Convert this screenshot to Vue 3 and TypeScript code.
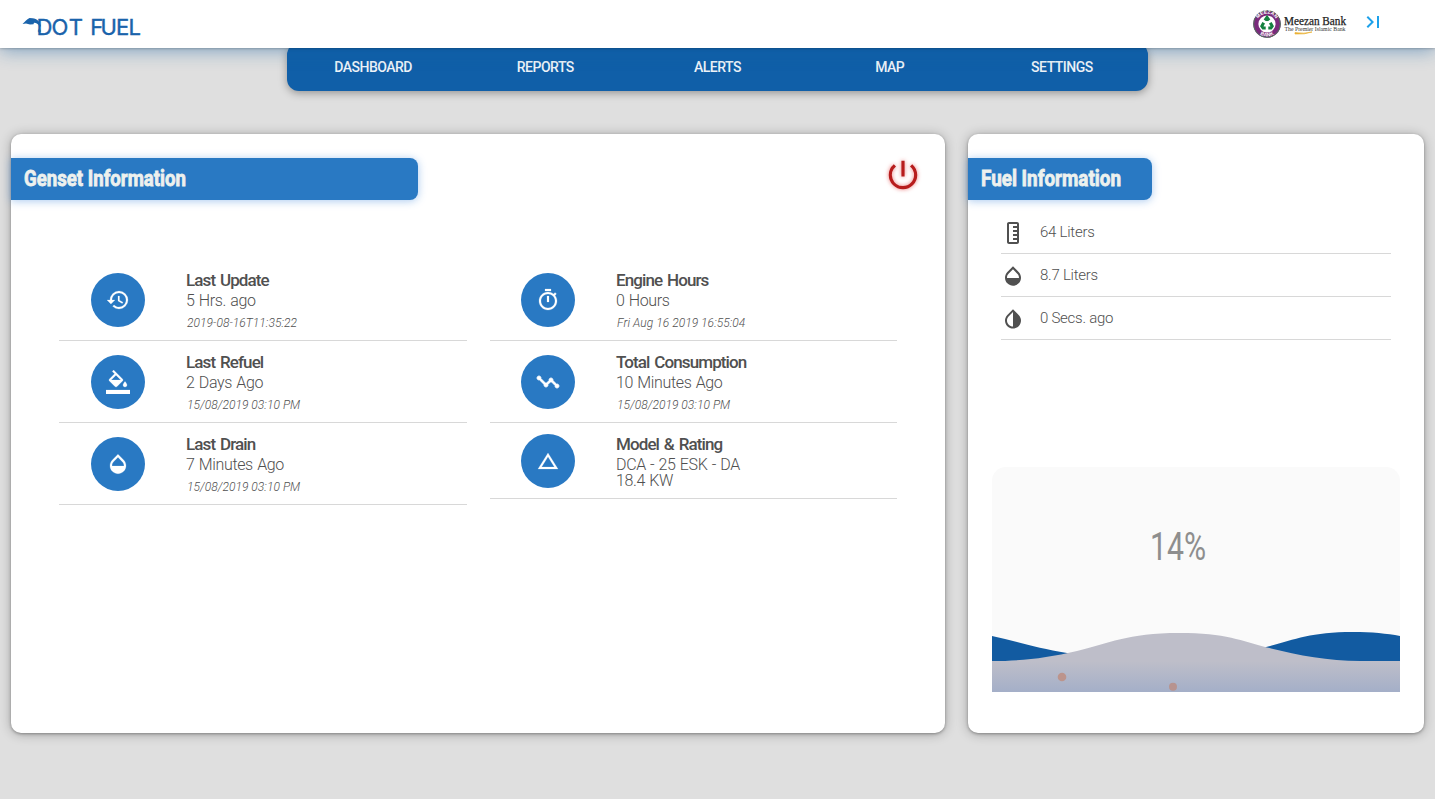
<script setup lang="ts">
interface InfoRow {
  icon: string
  title: string
  value: string[]
  stamp?: string
  flip?: boolean
}

interface FuelRow {
  icon: string
  text: string
  rotate?: boolean
}

const icons: Record<string, string> = {
  history:
    'M13 3a9 9 0 0 0-9 9H1l3.89 3.89.07.14L9 12H6c0-3.87 3.13-7 7-7s7 3.13 7 7-3.13 7-7 7c-1.93 0-3.68-.79-4.94-2.06l-1.42 1.42A8.954 8.954 0 0 0 13 21a9 9 0 0 0 0-18zm-1 5v5l4.28 2.54.72-1.21-3.5-2.08V8H12z',
  fill:
    'M16.56 8.94L7.62 0 6.21 1.41l2.38 2.38-5.15 5.15c-.59.59-.59 1.54 0 2.12l5.5 5.5c.29.29.68.44 1.06.44s.77-.15 1.06-.44l5.5-5.5c.59-.58.59-1.53 0-2.12zM5.21 10L10 5.21 14.79 10H5.21zM19 11.5s-2 2.17-2 3.5c0 1.1.9 2 2 2s2-.9 2-2c0-1.33-2-3.5-2-3.5zM0 20h24v4H0z',
  opacity:
    'M17.66 8L12 2.35 6.34 8C4.78 9.56 4 11.64 4 13.64s.78 4.11 2.34 5.67 3.61 2.35 5.66 2.35 4.1-.79 5.66-2.35S20 15.64 20 13.64 19.22 9.56 17.66 8zM6 14c.01-2 .62-3.27 1.76-4.4L12 5.27l4.24 4.38C17.38 10.77 17.99 12 18 14H6z',
  timer:
    'M15 1H9v2h6V1zm-4 13h2V8h-2v6zm8.03-6.61l1.42-1.42c-.43-.51-.9-.99-1.41-1.41l-1.42 1.42C16.07 4.74 14.12 4 12 4c-4.97 0-9 4.03-9 9s4.02 9 9 9 9-4.03 9-9c0-2.12-.74-4.07-1.97-5.61zM12 20c-3.87 0-7-3.13-7-7s3.13-7 7-7 7 3.13 7 7-3.13 7-7 7z',
  timeline:
    'M23 8c0 1.1-.9 2-2 2-.18 0-.35-.02-.51-.07l-3.56 3.55c.05.16.07.34.07.52 0 1.1-.9 2-2 2s-2-.9-2-2c0-.18.02-.36.07-.52l-2.55-2.55c-.16.05-.34.07-.52.07s-.36-.02-.52-.07l-4.55 4.56c.05.16.07.33.07.51 0 1.1-.9 2-2 2s-2-.9-2-2 .9-2 2-2c.18 0 .35.02.51.07l4.56-4.55C8.02 9.36 8 9.18 8 9c0-1.1.9-2 2-2s2 .9 2 2c0 .18-.02.36-.07.52l2.55 2.55c.16-.05.34-.07.52-.07s.36.02.52.07l3.55-3.56C19.02 8.35 19 8.18 19 8c0-1.1.9-2 2-2s2 .9 2 2z',
  triangle: 'M12 7.77L18.39 18H5.61L12 7.77M12 4L2 20h20L12 4z',
  ruler:
    'M21 6H3c-1.1 0-2 .9-2 2v8c0 1.1.9 2 2 2h18c1.1 0 2-.9 2-2V8c0-1.1-.9-2-2-2zm0 10H3V8h2v4h2V8h2v4h2V8h2v4h2V8h2v4h2V8h2v8z',
  invert:
    'M17.66 7.93L12 2.27 6.34 7.93c-3.12 3.12-3.12 8.19 0 11.31C7.9 20.8 9.95 21.58 12 21.58s4.1-.78 5.66-2.34c3.12-3.12 3.12-8.19 0-11.31zM12 19.59c-1.6 0-3.11-.62-4.24-1.76C6.62 16.69 6 15.19 6 13.59s.62-3.11 1.76-4.24L12 5.1v14.49z',
  power:
    'M13 3h-2v10h2V3zm4.83 2.17l-1.42 1.42A6.92 6.92 0 0 1 19 12c0 3.87-3.13 7-7 7A6.995 6.995 0 0 1 7.58 6.58L6.17 5.17A8.932 8.932 0 0 0 3 12a9 9 0 0 0 18 0c0-2.74-1.23-5.18-3.17-6.83z',
  lastPage: 'M5.59 7.41L10.18 12l-4.59 4.59L7 18l6-6-6-6zM16 6h2v12h-2z',
}

const menu: string[] = ['DASHBOARD', 'REPORTS', 'ALERTS', 'MAP', 'SETTINGS']

const columns: InfoRow[][] = [
  [
    { icon: 'history', title: 'Last Update', value: ['5 Hrs. ago'], stamp: '2019-08-16T11:35:22' },
    { icon: 'fill', title: 'Last Refuel', value: ['2 Days Ago'], stamp: '15/08/2019 03:10 PM' },
    { icon: 'opacity', title: 'Last Drain', value: ['7 Minutes Ago'], stamp: '15/08/2019 03:10 PM' },
  ],
  [
    { icon: 'timer', title: 'Engine Hours', value: ['0 Hours'], stamp: 'Fri Aug 16 2019 16:55:04' },
    { icon: 'timeline', title: 'Total Consumption', value: ['10 Minutes Ago'], stamp: '15/08/2019 03:10 PM', flip: true },
    { icon: 'triangle', title: 'Model & Rating', value: ['DCA - 25 ESK - DA', '18.4 KW'] },
  ],
]

const fuel: FuelRow[] = [
  { icon: 'ruler', text: '64 Liters', rotate: true },
  { icon: 'opacity', text: '8.7 Liters' },
  { icon: 'invert', text: '0 Secs. ago' },
]
</script>

<template>
  <div class="page">
    <header class="topbar">
      <svg class="brand" width="130" height="34" viewBox="0 0 130 34">
        <path
          d="M.5 14L4 10.500 5.500 9.200 7.500 8 10.500 8.200C15 8.800 18.300 11.500 19 16.500L17.300 16.300C16.300 14 14.500 12.800 12 12.800L11.500 14.200 8 14.500 4 13.500Z"
          fill="#1a63ab"
        />
        <path d="M17.300 17.800l1.300 2.400a1.500 1.500 0 1 1-2.600 0z" fill="#70767f" />
        <text class="brand-text" x="14.500 29.400 46.700" y="25">DOT</text>
        <text class="brand-text" x="68.300 78.500 94 106.500" y="25">FUEL</text>
      </svg>
      <div class="top-right">
        <svg class="bank" width="100" height="34" viewBox="0 0 100 34">
          <defs>
            <path id="ring-top" d="M4.700 16a10.300 10.300 0 0 1 20.600 0" />
            <path id="ring-bottom" d="M2.600 16a12.400 12.400 0 0 0 24.800 0" />
          </defs>
          <circle cx="15" cy="16" r="13.800" fill="#7a2a7c" />
          <circle cx="15" cy="16" r="13.400" fill="none" stroke="#4c7a58" stroke-width=".9" />
          <circle cx="15" cy="16" r="8.600" fill="#fff" />
          <path
            d="M12.900 12.300L15 9.300l2.100 3M18.300 14.800l1.900 3.400-1.300 1.900h-2.600M13.700 20.100h-2.600L9.800 18.200l1.900-3.400"
            fill="none"
            stroke="#14803f"
            stroke-width="3"
          />
          <text class="ring-text"><textPath href="#ring-top" startOffset="50%" text-anchor="middle">MEEZAN</textPath></text>
          <text class="ring-text"><textPath href="#ring-bottom" startOffset="50%" text-anchor="middle">BANK</textPath></text>
          <text class="bank-name" x="32" y="17" textLength="62" lengthAdjust="spacingAndGlyphs">Meezan Bank</text>
          <text class="bank-tag" x="32.500" y="22.800" textLength="61" lengthAdjust="spacingAndGlyphs">The Premier Islamic Bank</text>
          <path d="M43 24.600Q52 26 60 24Q53 26.600 43 26Z" fill="#eab135" stroke="#eab135" stroke-width=".7" />
        </svg>
        <svg class="last" width="24" height="24" viewBox="0 0 24 24"><path :d="icons.lastPage" /></svg>
      </div>
    </header>

    <nav class="menu">
      <a v-for="item in menu" :key="item" class="menu-item">{{ item }}</a>
    </nav>

    <main class="cards">
      <section class="card genset">
        <div class="card-head">
          <h2 class="banner banner-wide">
            <svg width="240" height="34"><text class="banner-text" x="0" y="22.500" textLength="162" lengthAdjust="spacingAndGlyphs">Genset Information</text></svg>
          </h2>
          <svg class="power" width="38" height="38" viewBox="0 0 24 24"><path :d="icons.power" /></svg>
        </div>
        <div class="info">
          <div v-for="(rows, c) in columns" :key="c" class="info-col">
            <div v-for="row in rows" :key="row.title" class="info-row">
              <div class="badge">
                <svg :class="{ flip: row.flip }" width="24" height="24" viewBox="0 0 24 24"><path :d="icons[row.icon]" /></svg>
              </div>
              <div class="info-body">
                <div class="info-title">{{ row.title }}</div>
                <div v-for="line in row.value" :key="line" class="info-value">{{ line }}</div>
                <div v-if="row.stamp" class="info-stamp">{{ row.stamp }}</div>
              </div>
            </div>
          </div>
        </div>
      </section>

      <section class="card fuel">
        <h2 class="banner banner-narrow">
          <svg width="160" height="34"><text class="banner-text" x="0" y="22.500" textLength="140" lengthAdjust="spacingAndGlyphs">Fuel Information</text></svg>
        </h2>
        <ul class="fuel-list">
          <li v-for="row in fuel" :key="row.text" class="fuel-row">
            <svg :class="{ rotate: row.rotate }" width="24" height="24" viewBox="0 0 24 24"><path :d="icons[row.icon]" /></svg>
            <span>{{ row.text }}</span>
          </li>
        </ul>
        <svg class="tank" width="408" height="225" viewBox="0 0 408 225">
          <defs>
            <linearGradient id="liquid" gradientUnits="userSpaceOnUse" x1="0" y1="194" x2="0" y2="225">
              <stop offset="0" stop-color="#bebec9" />
              <stop offset="1" stop-color="#a4afc8" />
            </linearGradient>
          </defs>
          <rect width="408" height="225" fill="#fafafa" />
          <text class="percent" x="158" y="93" textLength="56" lengthAdjust="spacingAndGlyphs">14%</text>
          <path d="M0 169C24 174 45 181 75 186L170 194L270 181C300 174 315 165 361 165C380 165 395 166.500 408 169V194H0Z" fill="#125ba1" />
          <path
            d="M0 194C30 194 55 191 85 184C117 176.500 135 166 187 166C234 166 250 174 275 180.500C305 188 335 194 368 194H408V225H0Z"
            fill="url(#liquid)"
          />
          <circle cx="70" cy="210" r="4.300" fill="#bc948c" />
          <circle cx="181" cy="219.700" r="4" fill="#b7938f" />
        </svg>
      </section>
    </main>
  </div>
</template>

<style>
body {
  background: #dfdfdf;
}
</style>

<style scoped>
.page {
  min-height: 799px;
  background: #dfdfdf;
  font-family: Roboto, "Open Sans", sans-serif;
  color: #505050;
}
.topbar {
  position: relative;
  z-index: 2;
  display: flex;
  justify-content: space-between;
  height: 48px;
  padding: 0 62px 0 22px;
  box-sizing: border-box;
  background: #fff;
  box-shadow: 0 0 3px rgba(0, 0, 0, 0.35), 0 3px 18px rgba(18, 95, 165, 0.45);
}
.brand {
  margin-top: 10px;
}
.brand-text {
  font: 400 22px Inter, sans-serif;
  fill: #1a63ab;
  stroke: #1a63ab;
  stroke-width: 0.4px;
}
.top-right {
  display: flex;
  gap: 9px;
}
.bank {
  margin-top: 8px;
}
.ring-text {
  font: 700 5px "Liberation Sans", sans-serif;
  fill: #fff;
}
.bank-name {
  font: 400 12px "Liberation Serif", serif;
  fill: #222;
  stroke: #222;
  stroke-width: 0.25px;
}
.bank-tag {
  font: 400 5.5px "Liberation Serif", serif;
  fill: #333;
}
.last {
  margin-top: 10px;
  margin-right: -12px;
  fill: #1da1ea;
}
.menu {
  display: flex;
  width: 861px;
  height: 48px;
  margin: -5px auto 0;
  padding-top: 5px;
  box-sizing: border-box;
  border-radius: 12px;
  background: #105fa8;
  box-shadow: 0 2px 8px rgba(0, 0, 0, 0.35);
}
.menu-item {
  flex: 1;
  text-align: center;
  color: #eef3f8;
  font-size: 14px;
  font-weight: 500;
  line-height: 39px;
  letter-spacing: -0.5px;
}
.cards {
  display: grid;
  grid-template-columns: 934px 456px;
  gap: 23px;
  padding: 43px 11px 0;
}
.card {
  height: 599px;
  border-radius: 10px;
  background: #fff;
  box-shadow: 0 1px 3px rgba(0, 0, 0, 0.3), 0 1px 12px rgba(0, 0, 0, 0.28);
}
.card-head {
  display: flex;
  justify-content: space-between;
}
.banner {
  height: 42px;
  margin: 24px 0 0;
  padding: 5px 0 0 13px;
  box-sizing: border-box;
  border-radius: 0 8px 8px 0;
  background: #2979c3;
  box-shadow: 0 1px 9px rgba(41, 121, 215, 0.4);
}
.banner-wide {
  width: 407px;
}
.banner-narrow {
  width: 184px;
}
.banner-text {
  font: 700 22px Roboto, sans-serif;
  fill: #edf1ee;
  stroke: #edf1ee;
  stroke-width: 0.8px;
}
.power {
  margin: 22px 23px 0 0;
  fill: #b71c1c;
  filter: drop-shadow(0 0 2px rgba(220, 30, 30, 0.6));
}
.info {
  display: grid;
  grid-template-columns: 408px 407px;
  gap: 23px;
  margin: 59px 0 0 48px;
}
.info-row {
  display: flex;
  align-items: center;
  padding: 12px 0 9px 32px;
  border-bottom: 1px solid #d8d8d8;
}
.info-col + .info-col .info-row {
  padding-left: 31px;
}
.badge {
  display: grid;
  place-items: center;
  width: 54px;
  height: 54px;
  margin: -1px 41px 1px 0;
  border-radius: 50%;
  background: #2979c3;
  fill: #fff;
}
.badge path {
  stroke: #fff;
  stroke-width: 0.2px;
}
.badge .flip {
  transform: scaleY(-1);
}
.badge .flip path {
  stroke-width: 0.8px;
}
.info-title {
  margin: -1px 0 3px;
  font-size: 17px;
  font-weight: 500;
  line-height: 20px;
  letter-spacing: -0.9px;
  word-spacing: 1.5px;
}
.info-value {
  font-size: 16px;
  font-weight: 300;
  line-height: 16px;
  letter-spacing: -0.35px;
  word-spacing: 0.7px;
}
.info-stamp {
  margin: 6px 0 0 1px;
  font-size: 12px;
  font-style: italic;
  font-weight: 300;
  line-height: 16px;
  letter-spacing: 0.05px;
}
.fuel-list {
  width: 390px;
  margin: 11px 0 0 33px;
  padding: 0;
  list-style: none;
}
.fuel-row {
  display: flex;
  align-items: center;
  gap: 15px;
  height: 42px;
  border-bottom: 1px solid #d8d8d8;
  font-size: 15px;
  font-weight: 300;
  letter-spacing: -0.25px;
}
.fuel-row svg {
  margin-top: 2px;
  fill: #505050;
}
.rotate {
  transform: rotate(90deg);
}
.tank {
  display: block;
  margin: 127px 0 0 24px;
  border-radius: 14px 14px 0 0;
}
.percent {
  font: 400 39px Roboto, sans-serif;
  fill: #8e8e8e;
}
</style>
